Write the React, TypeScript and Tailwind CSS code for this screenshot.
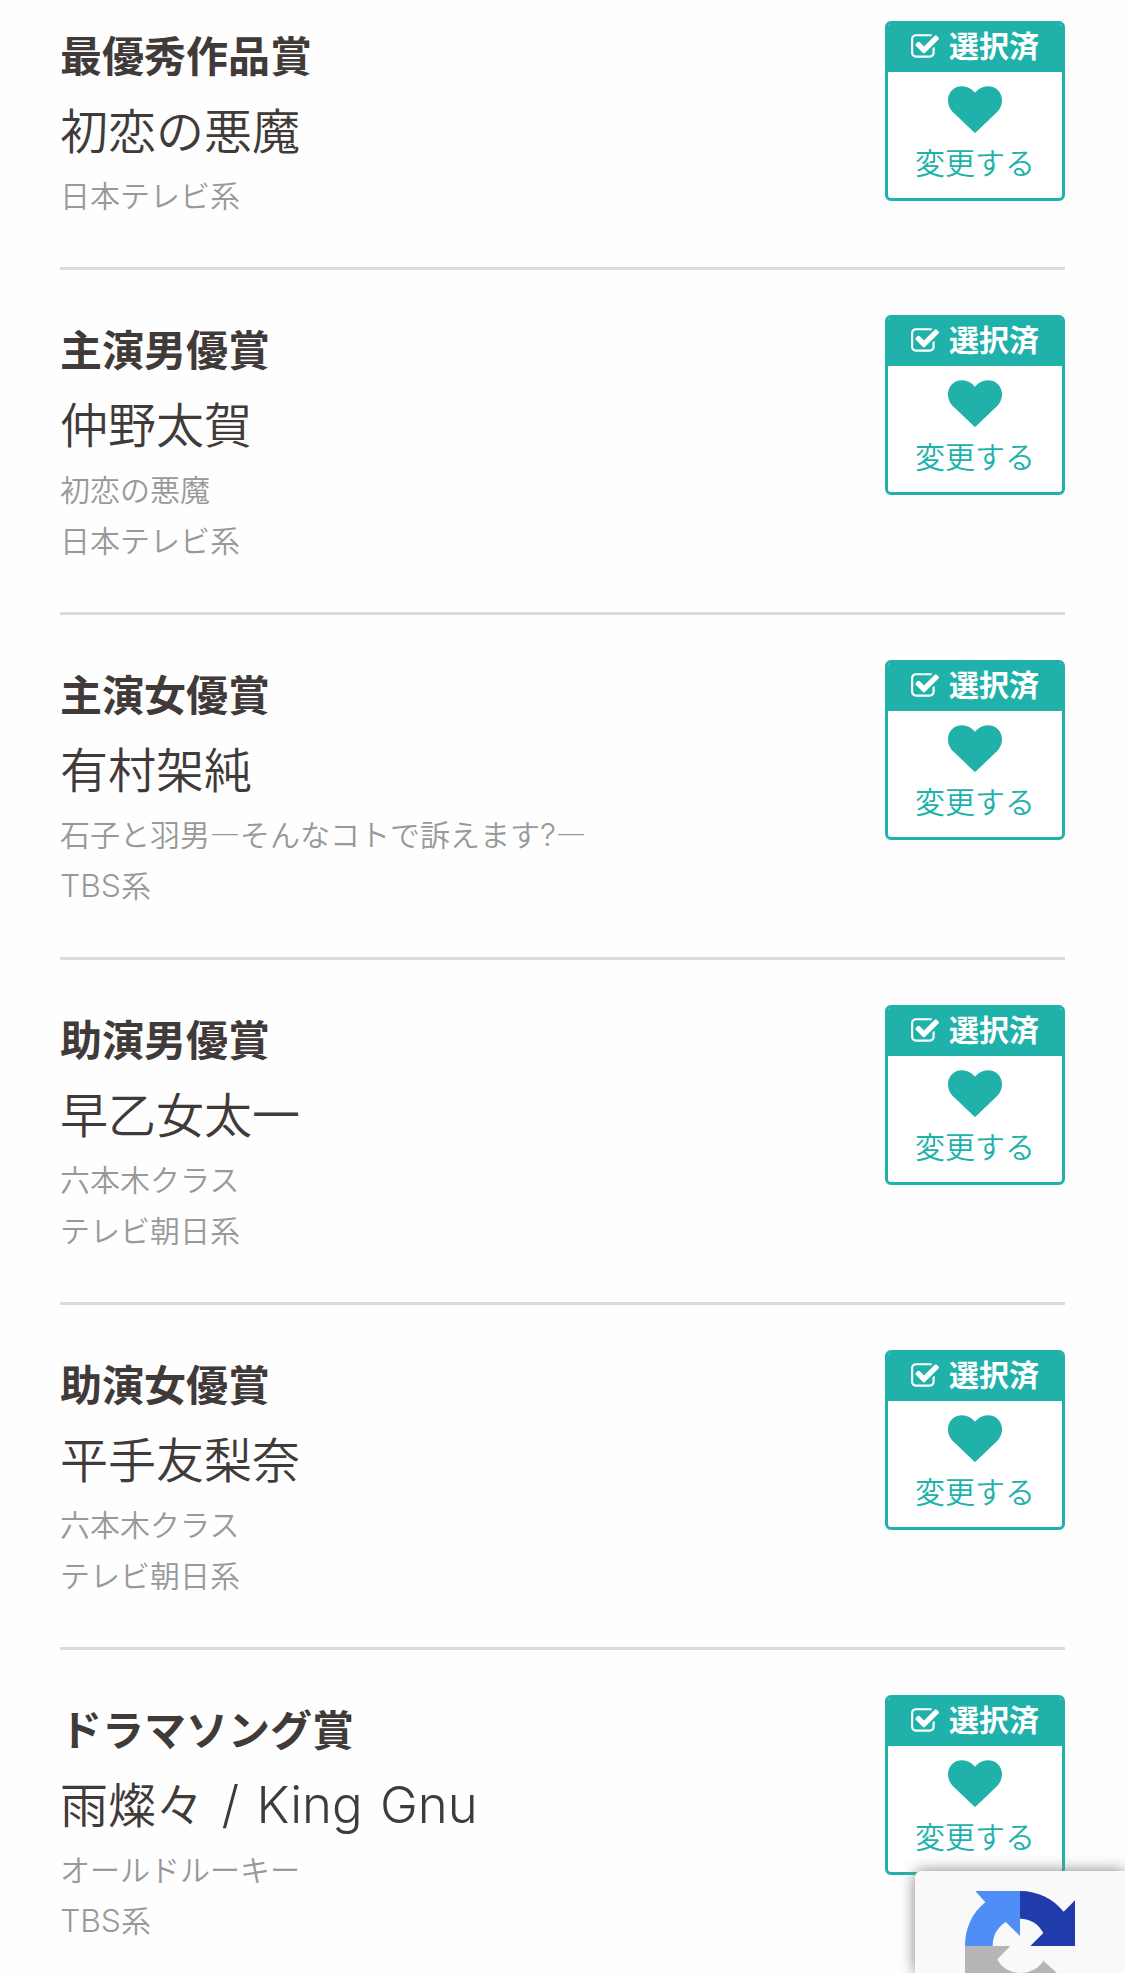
type Award = {
  title: string
  name: string
  details: string[]
}

const awards: Award[] = [
  { title: '最優秀作品賞', name: '初恋の悪魔', details: ['日本テレビ系'] },
  { title: '主演男優賞', name: '仲野太賀', details: ['初恋の悪魔', '日本テレビ系'] },
  { title: '主演女優賞', name: '有村架純', details: ['石子と羽男―そんなコトで訴えます?―', 'TBS系'] },
  { title: '助演男優賞', name: '早乙女太一', details: ['六本木クラス', 'テレビ朝日系'] },
  { title: '助演女優賞', name: '平手友梨奈', details: ['六本木クラス', 'テレビ朝日系'] },
  { title: 'ドラマソング賞', name: '雨燦々 / King Gnu', details: ['オールドルーキー', 'TBS系'] },
]

// Latin runs get their own face, the rest stays in the Japanese one
function MixedText({ text }: { text: string }) {
  return text.split(/([A-Za-z?/ ]+)/).map((part, i) =>
    i % 2 ? (
      <span key={i} className="font-['Inter',sans-serif] font-light text-[1.06em] leading-none [word-spacing:0.06em]">{part}</span>
    ) : (
      part
    )
  )
}

function CheckIcon() {
  return (
    <svg viewBox="0 0 1792 1792" className="w-[30px] h-[30px]" fill="currentColor">
      <path d="M1472 930v318q0 119-84.5 203.5t-203.5 84.5h-832q-119 0-203.5-84.5t-84.5-203.5v-832q0-119 84.5-203.5t203.5-84.5h832q63 0 117 25 15 7 18 23 3 17-9 29l-49 49q-10 10-23 10-3 0-9-2-23-6-45-6h-832q-66 0-113 47t-47 113v832q0 66 47 113t113 47h832q66 0 113-47t47-113v-254q0-13 9-22l64-64q10-10 23-10 6 0 12 3 20 8 20 29zm231-489l-814 814q-24 24-57 24t-57-24l-430-430q-24-24-24-57t24-57l110-110q24-24 57-24t57 24l263 263 647-647q24-24 57-24t57 24l110 110q24 24 24 57t-24 57z" />
    </svg>
  )
}

function HeartIcon() {
  return (
    <svg viewBox="0 0 162 140" className="w-[54px] h-[47px]" fill="currentColor">
      <path d="M81 20C91 7 104 0 120 0C144 0 162 18 162 42C162 59 154 72 142 83L84 138Q81 141 78 138L20 83C8 72 0 59 0 42C0 18 18 0 42 0C58 0 71 7 81 20Z" />
    </svg>
  )
}

function VoteButton() {
  return (
    <button className="flex flex-col items-center w-[180px] h-[180px] shrink-0 rounded-[6px] border-3 border-[#20b2aa] bg-white text-[#20b2aa] overflow-hidden">
      <span className="flex items-center w-full h-12 shrink-0 pl-[22px] pb-[3px] gap-[9px] bg-[#20b2aa] text-white">
        <CheckIcon />
        <span className="pb-1 text-[30px] leading-[41px] font-bold">選択済</span>
      </span>
      <span className="mt-[14px]">
        <HeartIcon />
      </span>
      <span className="mt-[6px] text-[30px] leading-[44px] font-[350]">変更する</span>
    </button>
  )
}

function AwardRow({ award }: { award: Award }) {
  return (
    <li className="flex justify-between items-start pb-[45px] mb-[45px] border-b-3 border-[#dcdcdc]">
      <div className="pb-0.5 text-[#403a39]">
        <h2 className="text-[42px] leading-[66px] font-bold">{award.title}</h2>
        <p className="text-[48px] leading-[82px] font-[350]">
          <MixedText text={award.name} />
        </p>
        {award.details.map((detail) => (
          <p key={detail} className="text-[30px] leading-[51px] font-[350] text-[#999]">
            <MixedText text={detail} />
          </p>
        ))}
      </div>
      <VoteButton />
    </li>
  )
}

function RecaptchaBadge() {
  return (
    <div className="fixed right-0 bottom-0 w-[210px] h-[102px] rounded-tl-[6px] bg-[#f9f9f9] shadow-[0_0_15px_gray] overflow-hidden">
      <svg viewBox="0 0 330 330" className="w-[110px] h-[110px] ml-[50px] mt-5">
        <path fill="#4f8ef7" d="M0 165C0 112 21 66 61 34L31 0H165V135L122 93C96 109 83 136 83 165Z" />
        <path fill="#203cab" d="M165 0C219 0 265 24 296 62L330 28V165H196L235 126C221 99 196 83 165 83Z" />
        <path fill="#b5b5b5" d="M0 165H136L97 205C110 230 135 246 165 246C195 246 222 231 235 209L300 268C268 307 219 330 165 330C112 330 66 306 34 268L0 300Z" />
      </svg>
    </div>
  )
}

export default function App() {
  return (
    <div className="h-[1973px] overflow-hidden bg-[#fefefe] px-[60px] pt-[21px] font-['Noto_Sans_CJK_JP',sans-serif]">
      <ul>
        {awards.map((award) => (
          <AwardRow key={award.title} award={award} />
        ))}
      </ul>
      <RecaptchaBadge />
    </div>
  )
}
